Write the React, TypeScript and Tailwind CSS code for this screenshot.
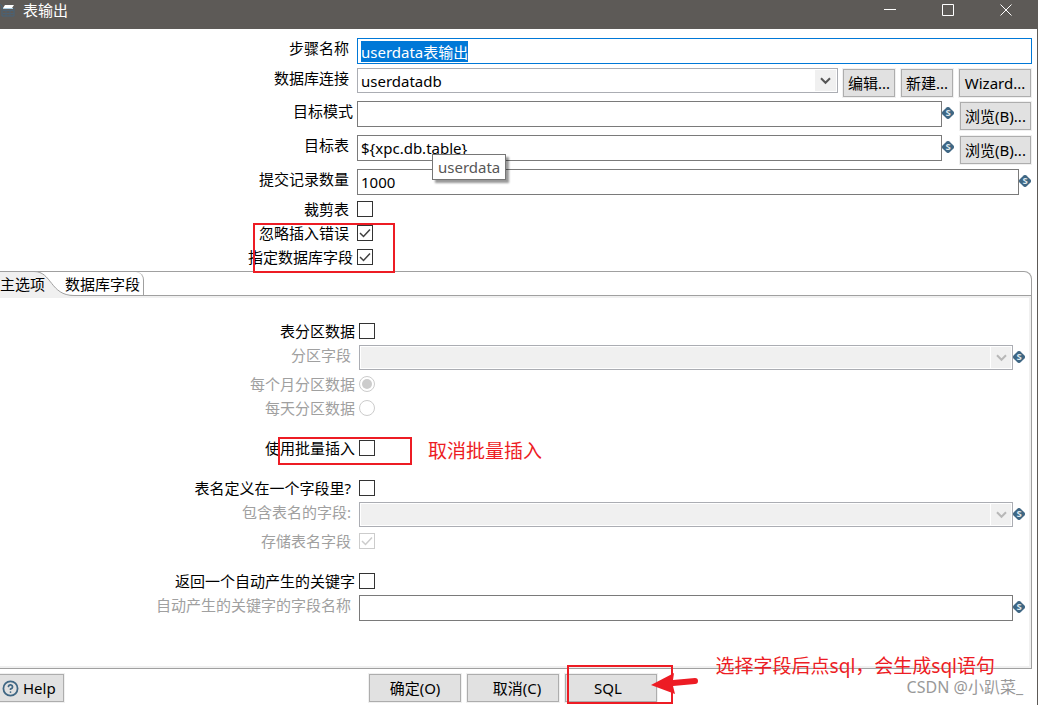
import React, { useEffect, useRef } from 'react';
import { HelpCircle } from 'lucide-react';

/* Small diamond that marks fields accepting ${variables} */
const VarIcon: React.FC = () => (
  <svg viewBox="0 0 12 12" className="w-3 h-3 mt-1.5 mr-px shrink-0">
    <path d="M4.6 0.5 Q6 -0.6 7.4 0.5 L11.5 4.6 Q12.6 6 11.5 7.4 L7.4 11.5 Q6 12.6 4.6 11.5 L0.5 7.4 Q-0.6 6 0.5 4.6 Z" fill="#3f6784" />
    <text x="6" y="9.4" textAnchor="middle" fontSize="9.5" fontWeight="700" fill="#dfe8ee">S</text>
  </svg>
);

type LabelProps = {
  htmlFor: string;
  wide?: boolean;
  muted?: boolean;
  column: string;
  children: React.ReactNode;
};

const Label: React.FC<LabelProps> = ({ htmlFor, wide, muted, column, children }) => (
  <div className={`${column} shrink-0 text-right leading-5 whitespace-nowrap ${wide ? 'pr-1' : 'pr-2'}`}>
    <label htmlFor={htmlFor} className={muted ? 'text-[#a0a0a0]' : ''}>{children}</label>
  </div>
);

const TextField: React.FC<{ id: string; value?: string }> = ({ id, value = '' }) => (
  <input id={id} type="text" defaultValue={value} className="flex-1 min-w-0 h-[26px] px-[3px] border border-[#7a7a7a] bg-white outline-none" />
);

const Combo: React.FC<{ id: string; value?: string; disabled?: boolean }> = ({ id, value = '', disabled }) => (
  <div className="relative flex-1 min-w-0 h-[25px] border border-[#abadb3] p-px bg-white">
    <select
      id={id}
      disabled={disabled}
      className="block w-full h-full appearance-none pl-0.5 pr-6 outline-none bg-white disabled:bg-[#f0f0f0] disabled:opacity-100"
    >
      <option>{value}</option>
    </select>
    <span className={`absolute inset-y-px right-px w-[21px] flex items-center justify-center pointer-events-none bg-[#f0f0f0] ${disabled ? 'border-l border-white' : ''}`}>
      <svg viewBox="0 0 11 8" className="w-[11px] h-2" fill="none" stroke={disabled ? '#b8b8b8' : '#555555'} strokeWidth="2">
        <path d="M1 1.2 L5.5 5.8 L10 1.2" />
      </svg>
    </span>
  </div>
);

const CheckBox: React.FC<{ id: string; checked?: boolean; disabled?: boolean }> = ({ id, checked, disabled }) => (
  <span className="relative w-4 h-4 shrink-0">
    <input
      id={id}
      type="checkbox"
      defaultChecked={checked}
      disabled={disabled}
      className="peer block w-4 h-4 appearance-none border border-[#333333] bg-white disabled:border-[#cccccc]"
    />
    <svg
      viewBox="0 0 16 16"
      className="absolute inset-0 w-4 h-4 hidden peer-checked:block pointer-events-none"
      fill="none"
      stroke={disabled ? '#cccccc' : '#404040'}
      strokeWidth="1.5"
    >
      <path d="M3 8 L6.5 11.5 L13 4.5" />
    </svg>
  </span>
);

const Radio: React.FC<{ id: string; checked?: boolean }> = ({ id, checked }) => (
  <span className="relative w-4 h-4 shrink-0">
    <input
      id={id}
      type="radio"
      name="partition-by"
      defaultChecked={checked}
      disabled
      className="peer block w-4 h-4 appearance-none rounded-full border border-[#cccccc] bg-white"
    />
    <span className="absolute inset-[3px] rounded-full bg-[#cccccc] hidden peer-checked:block"></span>
  </span>
);

const Button: React.FC<{ className: string; children: React.ReactNode }> = ({ className, children }) => (
  <button type="button" className={`h-7 m-px shrink-0 border border-[#adadad] bg-[#e1e1e1] ring-1 ring-[#f0f0f0] whitespace-nowrap ${className}`}>
    {children}
  </button>
);

const TitleBar: React.FC = () => (
  <header className="h-[29px] pb-[9px] flex items-center bg-[#5d5a57] text-white">
    <svg viewBox="0 0 16 16" className="w-4 h-4 shrink-0">
      <path d="M0 2 L2 4 L2 14 L14 14 L14 6" fill="none" stroke="#46637a" />
      <path d="M3 8.5 H14 M3 11.5 H14 M6 7 V14 M10 7 V14" stroke="#4c6172" />
      <path d="M5 3 H14 L12 6 H3 Z" fill="#ffffff" />
      <path d="M3 6 H13 V7 H3 Z" fill="#a9cbe0" />
    </svg>
    <h1 className="flex-1 pl-[7px]">表输出</h1>
    <div className="flex pr-0.5">
      <button type="button" aria-label="最小化" className="w-[58px] h-5 flex items-center justify-center">
        <svg viewBox="0 0 12 12" className="w-3 h-3" stroke="#ffffff"><path d="M0 5.5 H12" /></svg>
      </button>
      <button type="button" aria-label="最大化" className="w-[58px] h-5 flex items-center justify-center">
        <svg viewBox="0 0 12 12" className="w-3 h-3" stroke="#ffffff" fill="none"><path d="M0.5 0.5 H11.5 V11.5 H0.5 Z" /></svg>
      </button>
      <button type="button" aria-label="关闭" className="w-[58px] h-5 flex items-center justify-center">
        <svg viewBox="0 0 12 12" className="w-3 h-3" stroke="#ffffff"><path d="M0.5 0.5 L11.5 11.5 M11.5 0.5 L0.5 11.5" /></svg>
      </button>
    </div>
  </header>
);

const top = 'w-[357px]';
const inner = 'w-[359px]';

const StepForm: React.FC = () => {
  const nameRef = useRef<HTMLInputElement>(null);

  useEffect(() => {
    nameRef.current?.focus();
    nameRef.current?.select();
  }, []);

  return (
    <div className="pt-[9px] pr-[5px]">
      <div className="flex items-start h-[30px]">
        <Label column={top} htmlFor="step">步骤名称</Label>
        <input
          id="step"
          ref={nameRef}
          type="text"
          defaultValue="userdata表输出"
          className="flex-1 min-w-0 h-[26px] px-[3px] border border-[#0078d7] outline-none selection:bg-[#0078d7] selection:text-white"
        />
      </div>
      <div className="flex items-start h-[33px]">
        <Label column={top} htmlFor="connection">数据库连接</Label>
        <Combo id="connection" value="userdatadb" />
        <div className="flex gap-1 pl-1">
          <Button className="w-[52px]">编辑...</Button>
          <Button className="w-[52px]">新建...</Button>
          <Button className="w-[72px]">Wizard...</Button>
        </div>
      </div>
      <div className="flex items-start h-[34px]">
        <Label column={top} htmlFor="schema" wide>目标模式</Label>
        <TextField id="schema" />
        <VarIcon />
        <div className="pl-1"><Button className="w-[71px]">浏览(B)...</Button></div>
      </div>
      <div className="flex items-start h-[34px]">
        <Label column={top} htmlFor="table">目标表</Label>
        <div className="relative flex flex-1 min-w-0">
          <TextField id="table" value="${xpc.db.table}" />
          <div role="tooltip" className="absolute left-[75px] top-[19px] z-10 h-[26px] px-[5px] leading-6 border border-[#767676] bg-white text-[#575757] shadow-[3px_3px_2px_rgba(0,0,0,0.4)]">
            userdata
          </div>
        </div>
        <VarIcon />
        <div className="pl-1"><Button className="w-[71px]">浏览(B)...</Button></div>
      </div>
      <div className="flex items-start h-8">
        <Label column={top} htmlFor="commit">提交记录数量</Label>
        <TextField id="commit" value="1000" />
        <VarIcon />
      </div>
      <div className="flex items-center h-4">
        <Label column={top} htmlFor="truncate">裁剪表</Label>
        <CheckBox id="truncate" />
      </div>
      <div className="relative pb-1.5">
        <div className="flex items-center h-4 mt-2">
          <Label column={top} htmlFor="ignore">忽略插入错误</Label>
          <CheckBox id="ignore" checked />
        </div>
        <div className="flex items-center h-4 mt-2">
          <Label column={top} htmlFor="specify" wide>指定数据库字段</Label>
          <CheckBox id="specify" checked />
        </div>
        <div className="absolute left-[253px] -top-0.5 w-[142px] h-[50px] border-2 border-[#ed1c24] z-10 pointer-events-none"></div>
      </div>
    </div>
  );
};

const Tabs: React.FC = () => (
  <div role="tablist" className="h-6 flex border-b border-[#a0a0a0]">
    <button type="button" role="tab" aria-selected="true" className="relative w-[65px] h-[23px] text-left whitespace-nowrap">
      <svg viewBox="0 0 74 25" className="absolute left-0 -top-px w-[74px] h-[25px]">
        <path d="M0 0.5 H34 C52 0.5 50 24.5 74 24.5 V25 H0 Z" fill="#f0f0f0" />
        <path d="M0 0.5 H34 C52 0.5 50 24.5 74 24.5" fill="none" stroke="#a0a0a0" />
      </svg>
      <span className="relative">主选项</span>
    </button>
    <button type="button" role="tab" aria-selected="false" className="w-[79px] h-[23px] border-r border-[#a0a0a0] rounded-tr-lg text-left whitespace-nowrap">
      数据库字段
    </button>
  </div>
);

const MainOptions: React.FC = () => (
  <section className="flex-1 border-y-2 border-r-2 border-[#f0f0f0] pt-[25px] pr-[3px]">
    <div className="flex items-center h-4">
      <Label column={inner} htmlFor="partition" wide>表分区数据</Label>
      <CheckBox id="partition" />
    </div>
    <div className="flex items-start mt-1.5">
      <Label column={inner} htmlFor="partition-field" muted>分区字段</Label>
      <Combo id="partition-field" disabled />
      <VarIcon />
    </div>
    <div className="flex items-center h-4 mt-1.5">
      <Label column={inner} htmlFor="monthly" wide muted>每个月分区数据</Label>
      <Radio id="monthly" checked />
    </div>
    <div className="flex items-center h-4 mt-2">
      <Label column={inner} htmlFor="daily" wide muted>每天分区数据</Label>
      <Radio id="daily" />
    </div>
    <div className="relative flex items-center h-4 mt-6">
      <Label column={inner} htmlFor="batch" wide>使用批量插入</Label>
      <CheckBox id="batch" />
      <div className="absolute left-[278px] -top-[3px] w-[134px] h-[28px] border-2 border-[#ed1c24] pointer-events-none"></div>
      <p className="absolute left-[428px] top-px text-[19px] leading-5 text-[#ed1c24]">取消批量插入</p>
    </div>
    <div className="flex items-center h-4 mt-6">
      <Label column={inner} htmlFor="name-in-field">表名定义在一个字段里?</Label>
      <CheckBox id="name-in-field" />
    </div>
    <div className="flex items-start mt-1.5">
      <Label column={inner} htmlFor="name-field" muted>包含表名的字段:</Label>
      <Combo id="name-field" disabled />
      <VarIcon />
    </div>
    <div className="flex items-center h-4 mt-1.5">
      <Label column={inner} htmlFor="store-name" muted>存储表名字段</Label>
      <CheckBox id="store-name" checked disabled />
    </div>
    <div className="flex items-center h-4 mt-6">
      <Label column={inner} htmlFor="return-key" wide>返回一个自动产生的关键字</Label>
      <CheckBox id="return-key" />
    </div>
    <div className="flex items-start mt-1.5">
      <Label column={inner} htmlFor="key-field" muted>自动产生的关键字的字段名称</Label>
      <TextField id="key-field" />
      <VarIcon />
    </div>
  </section>
);

const Footer: React.FC = () => (
  <footer className="relative grid grid-cols-[1fr_auto_1fr] pt-1 pb-0.5 pr-[11px]">
    <div className="flex">
      <button type="button" className="h-7 w-16 my-px flex items-center gap-1 pl-0.5 border border-l-0 border-[#adadad] bg-[#e1e1e1] ring-1 ring-[#f0f0f0]">
        <HelpCircle size={17} color="#3f6784" strokeWidth={2.5} />
        Help
      </button>
    </div>
    <div className="flex gap-1">
      <Button className="w-[92px]">确定(O)</Button>
      <Button className="w-[92px] pl-2">取消(C)</Button>
      <div className="relative">
        <Button className="w-[92px] pr-1.5">SQL</Button>
        <div className="absolute left-[3px] -top-2 w-[106px] h-[39px] border-2 border-[#ed1c24] pointer-events-none"></div>
        <svg viewBox="0 0 48 22" className="absolute left-[87px] top-0 w-12 h-[22px]">
          <path d="M0 12 L23 0 L22 7 L44 5 Q47 5 47 8 Q47 11 44 11 L22 13 L24 21 Z" fill="#ed1c24" />
        </svg>
      </div>
    </div>
    <p className="absolute right-[42px] -top-3.5 text-[19px] leading-[22px] text-[#ed1c24] whitespace-nowrap">
      选择字段后点sql，会生成sql语句
    </p>
    <p className="absolute right-3.5 top-2 text-base leading-5 text-[#999999] whitespace-nowrap">CSDN @小趴菜_</p>
  </footer>
);

export default function App() {
  return (
    <main lang="zh-CN" className="min-h-screen flex flex-col overflow-hidden border-r border-[#5d5a57] bg-white text-black text-[15px] leading-5 font-['Noto_Sans','Noto_Sans_CJK_SC',sans-serif]">
      <TitleBar />
      <StepForm />
      <div className="flex-1 flex flex-col mr-[5px] border-t border-r border-b border-[#a0a0a0] rounded-tr-lg">
        <Tabs />
        <MainOptions />
      </div>
      <Footer />
    </main>
  );
}
